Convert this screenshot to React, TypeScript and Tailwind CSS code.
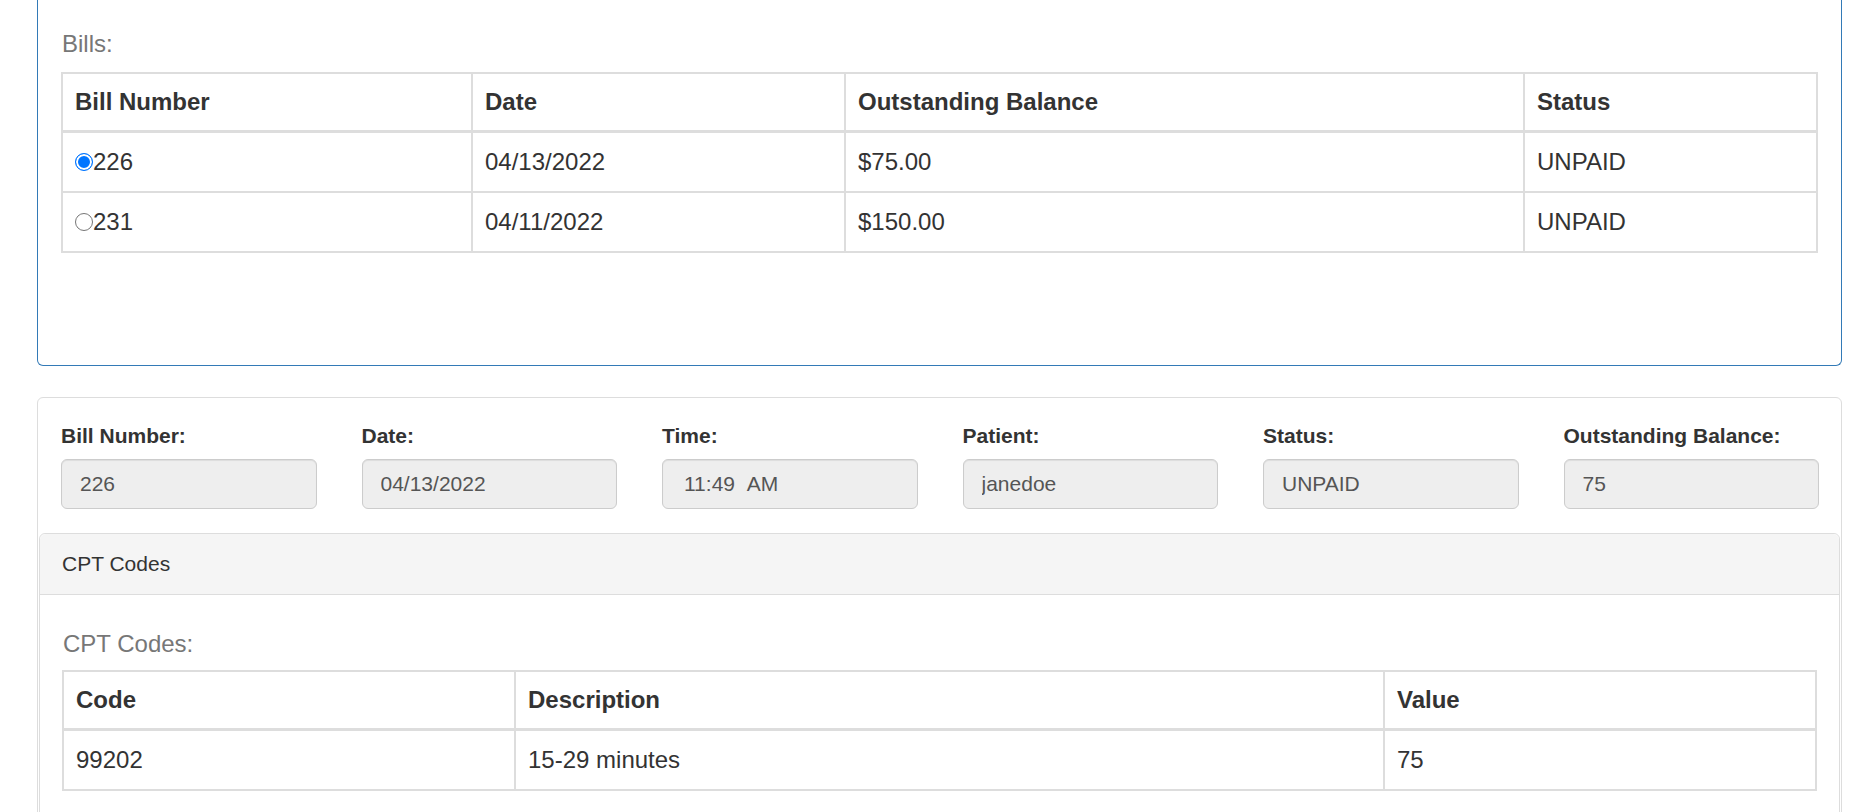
import React from "react";

function Radio({ checked }: { checked: boolean }) {
  return checked ? (
    <span className="inline-block h-[18px] w-[18px] shrink-0 rounded-full border-[1.5px] border-[#0075ff] bg-[#0075ff] shadow-[inset_0_0_0_2px_#ffffff]" />
  ) : (
    <span className="inline-block h-[18px] w-[18px] shrink-0 rounded-full border-[1.5px] border-[#767676] bg-white" />
  );
}

const bills = [
  { num: "226", date: "04/13/2022", bal: "$75.00", status: "UNPAID", checked: true },
  { num: "231", date: "04/11/2022", bal: "$150.00", status: "UNPAID", checked: false },
];

const fields = [
  { label: "Bill Number:", value: "226", time: false },
  { label: "Date:", value: "04/13/2022", time: false },
  { label: "Time:", value: "11:49\u00a0\u00a0AM", time: true },
  { label: "Patient:", value: "janedoe", time: false },
  { label: "Status:", value: "UNPAID", time: false },
  { label: "Outstanding Balance:", value: "75", time: false },
];

export default function App() {
  return (
    <div className="min-h-screen bg-white font-['Liberation_Sans',Arial,sans-serif] text-[#333]">
      <div className="ml-[37px] w-[1805px]">
        {/* Bills panel */}
        <div className="rounded-b-[6px] border border-t-0 border-[#337ab7] pb-[112px] pl-[23px] pr-[23px] pt-[27px]">
          <div className="mb-[11px] pl-px text-[24px] leading-[34px] text-[#777]">Bills:</div>
          <table className="w-full table-fixed border-collapse text-[24px] leading-[34px]">
            <colgroup>
              <col className="w-[410px]" />
              <col className="w-[373px]" />
              <col className="w-[679px]" />
              <col />
            </colgroup>
            <thead>
              <tr>
                <th className="border-2 border-b-[3px] border-[#ddd] px-[12px] py-[11px] text-left font-bold">Bill Number</th>
                <th className="border-2 border-b-[3px] border-[#ddd] px-[12px] py-[11px] text-left font-bold">Date</th>
                <th className="border-2 border-b-[3px] border-[#ddd] px-[12px] py-[11px] text-left font-bold">Outstanding Balance</th>
                <th className="border-2 border-b-[3px] border-[#ddd] px-[12px] py-[11px] text-left font-bold">Status</th>
              </tr>
            </thead>
            <tbody>
              {bills.map((b) => (
                <tr key={b.num}>
                  <td className="border-2 border-[#ddd] px-[12px] py-[12px]">
                    <div className="flex h-[34px] items-center">
                      <Radio checked={b.checked} />
                      <span>{b.num}</span>
                    </div>
                  </td>
                  <td className="border-2 border-[#ddd] px-[12px] py-[12px]">{b.date}</td>
                  <td className="border-2 border-[#ddd] px-[12px] py-[12px]">{b.bal}</td>
                  <td className="border-2 border-[#ddd] px-[12px] py-[12px]">{b.status}</td>
                </tr>
              ))}
            </tbody>
          </table>
        </div>

        {/* Bill detail panel */}
        <div className="mt-[31px] rounded-[6px] border border-[#ddd]">
          <div className="grid grid-cols-6 gap-x-[45px] pb-[24px] pl-[23px] pr-[22px] pt-[23px]">
            {fields.map((f) => (
              <div key={f.label} className="flex flex-col">
                <label className="mb-[8px] text-[21px] font-bold leading-[30px] text-[#333]">{f.label}</label>
                <input
                  readOnly
                  value={f.value}
                  className={
                    f.time
                      ? "h-[50px] w-full rounded-[6px] border border-[#ccc] bg-[#eee] pl-[21px] pr-[18px] text-[21px] text-[#555] shadow-[inset_0_1px_1px_rgba(0,0,0,0.075)] outline-none"
                      : "h-[50px] w-full rounded-[6px] border border-[#ccc] bg-[#eee] px-[18px] text-[21px] text-[#555] shadow-[inset_0_1px_1px_rgba(0,0,0,0.075)] outline-none"
                  }
                />
              </div>
            ))}
          </div>

          <div className="mx-px rounded-t-[6px] border border-[#ddd]">
            <div className="flex h-[61px] items-center rounded-t-[6px] border-b border-[#ddd] bg-[#f5f5f5] px-[22px] text-[21px] text-[#333]">
              CPT Codes
            </div>
            <div className="pb-[40px] pl-[22px] pr-[22px] pt-[32px]">
              <div className="mb-[9px] pl-px text-[24px] leading-[34px] text-[#777]">CPT Codes:</div>
              <table className="w-full table-fixed border-collapse text-[24px] leading-[34px]">
                <colgroup>
                  <col className="w-[452px]" />
                  <col className="w-[869px]" />
                  <col />
                </colgroup>
                <thead>
                  <tr>
                    <th className="border-2 border-b-[3px] border-[#ddd] px-[12px] py-[11px] text-left font-bold">Code</th>
                    <th className="border-2 border-b-[3px] border-[#ddd] px-[12px] py-[11px] text-left font-bold">Description</th>
                    <th className="border-2 border-b-[3px] border-[#ddd] px-[12px] py-[11px] text-left font-bold">Value</th>
                  </tr>
                </thead>
                <tbody>
                  <tr>
                    <td className="border-2 border-[#ddd] px-[12px] py-[12px]">99202</td>
                    <td className="border-2 border-[#ddd] px-[12px] py-[12px]">15-29 minutes</td>
                    <td className="border-2 border-[#ddd] px-[12px] py-[12px]">75</td>
                  </tr>
                </tbody>
              </table>
            </div>
          </div>
        </div>
      </div>
    </div>
  );
}
